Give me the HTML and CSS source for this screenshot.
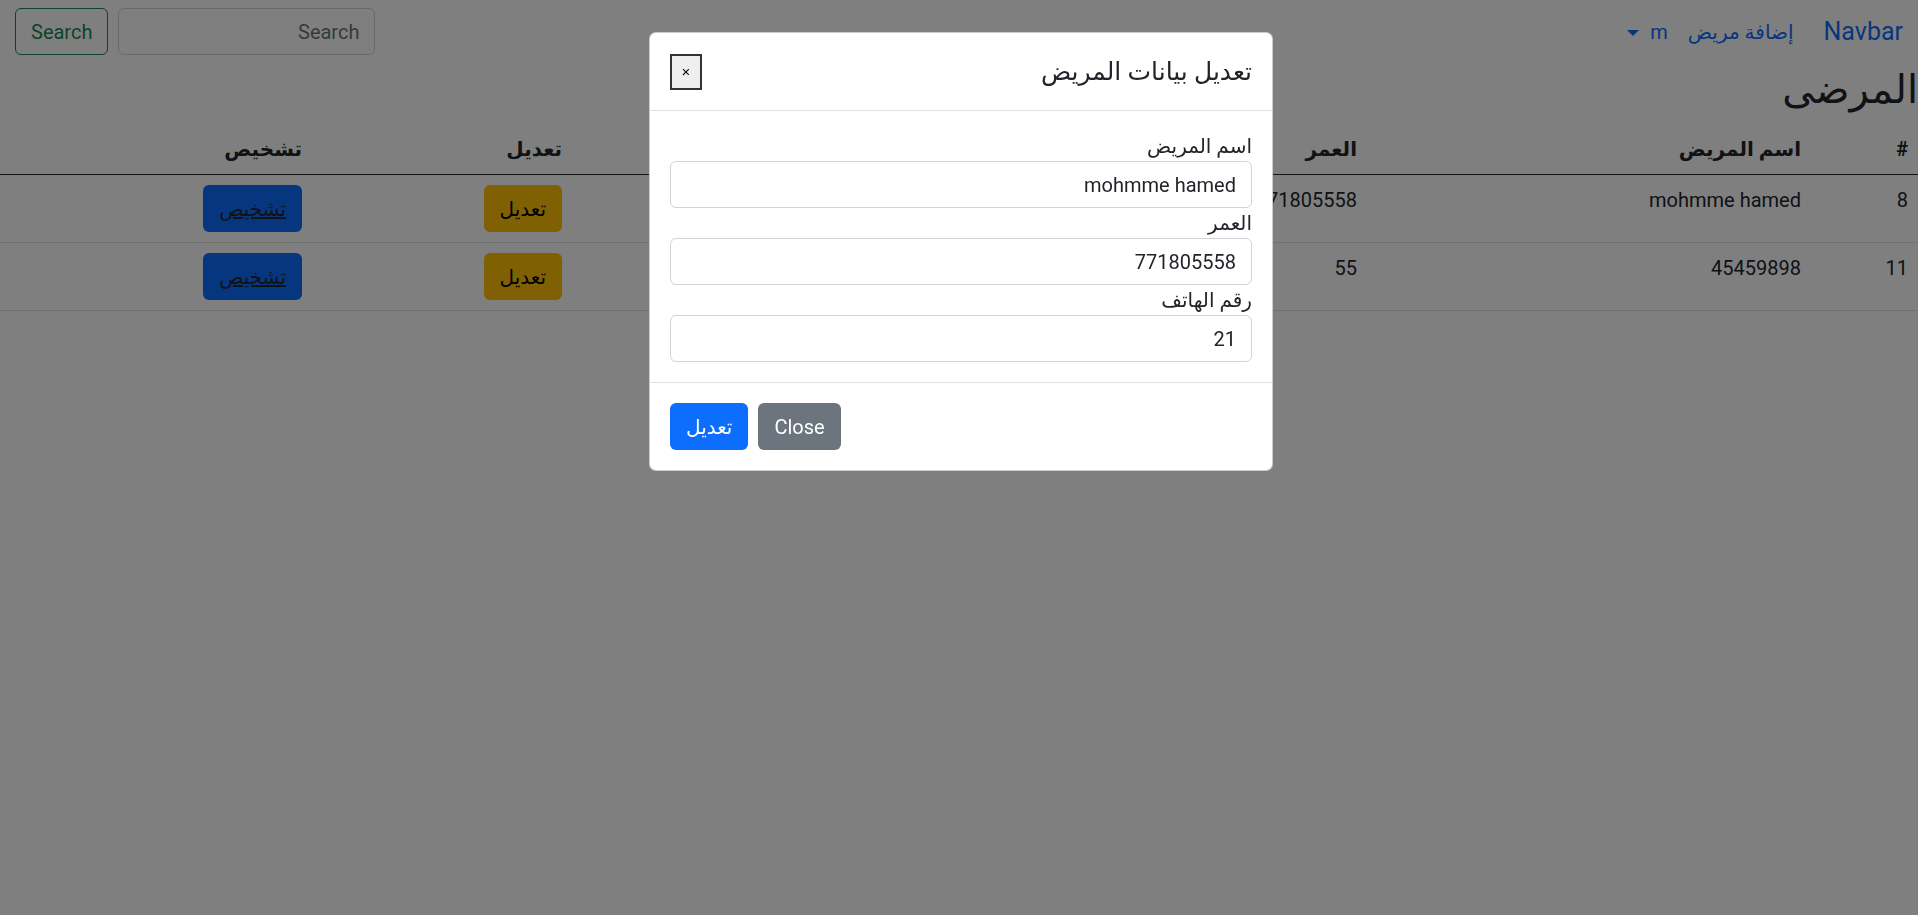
FILE: index.html
```html
<!DOCTYPE html>
<html lang="ar" dir="rtl">
<head>
  <meta charset="UTF-8">
  <title>المرضى</title>
  <link rel="stylesheet" href="styles.css">
</head>
<body>

<nav class="navbar">
  <a class="navbar-brand" href="#">Navbar</a>
  <ul class="navbar-nav">
    <li><a class="nav-link" href="#">إضافة مريض</a></li>
    <li><a class="nav-link dropdown-toggle" href="#">m</a></li>
  </ul>
  <form class="search-form">
    <input class="form-control search-input" type="search" placeholder="Search">
    <button class="btn btn-outline-success" type="button">Search</button>
  </form>
</nav>

<h2 class="page-title">المرضى</h2>

<table class="table">
  <colgroup>
    <col class="col-id">
    <col class="col-name">
    <col class="col-age">
    <col class="col-phone">
    <col class="col-edit">
    <col class="col-diag">
  </colgroup>
  <thead>
    <tr>
      <th>#</th>
      <th>اسم المريض</th>
      <th>العمر</th>
      <th>رقم الهاتف</th>
      <th>تعديل</th>
      <th>تشخيص</th>
    </tr>
  </thead>
  <tbody>
    <tr>
      <td>8</td>
      <td>mohmme hamed</td>
      <td>771805558</td>
      <td>21</td>
      <td><button class="btn btn-warning" type="button">تعديل</button></td>
      <td><button class="btn btn-primary" type="button"><a class="btn-link" href="#">تشخيص</a></button></td>
    </tr>
    <tr>
      <td>11</td>
      <td>45459898</td>
      <td>55</td>
      <td>771805558</td>
      <td><button class="btn btn-warning" type="button">تعديل</button></td>
      <td><button class="btn btn-primary" type="button"><a class="btn-link" href="#">تشخيص</a></button></td>
    </tr>
  </tbody>
</table>

<div class="modal">
  <div class="modal-dialog">
    <div class="modal-header">
      <h5 class="modal-title">تعديل بيانات المريض</h5>
      <button class="close-x" type="button">×</button>
    </div>
    <div class="modal-body">
      <label for="pname">اسم المريض</label>
      <input class="form-control" id="pname" type="text" value="mohmme hamed">
      <label for="page">العمر</label>
      <input class="form-control" id="page" type="text" value="771805558">
      <label for="pphone">رقم الهاتف</label>
      <input class="form-control" id="pphone" type="text" value="21">
    </div>
    <div class="modal-footer">
      <button class="btn btn-secondary" type="button">Close</button>
      <button class="btn btn-primary" type="button">تعديل</button>
    </div>
  </div>
</div>

</body>
</html>
```

FILE: styles.css
```css
body {
  margin: 0;
  font-family: Roboto, "DejaVu Sans", sans-serif;
  font-size: 20px;
  line-height: 30px;
  color: #212529;
  background: #fff;
  text-align: right;
}
a {
  color: #0d6efd;
  text-decoration: none;
}

/* buttons and inputs */
.btn {
  font-family: inherit;
  font-size: 20px;
  line-height: 30px;
  height: 47px;
  padding: 0 15px;
  border: 1px solid transparent;
  border-radius: 6px;
  cursor: pointer;
}
.btn-outline-success {
  color: #198754;
  border-color: #198754;
  background: transparent;
}
.btn-warning {
  background: #ffc107;
  color: #000;
}
.btn-primary {
  background: #0d6efd;
  color: #fff;
}
.btn-secondary {
  background: #6c757d;
  color: #fff;
}
.btn-link {
  color: #212529;
  text-decoration: underline;
}
.form-control {
  display: block;
  box-sizing: border-box;
  width: 100%;
  height: 47px;
  padding: 7px 15px;
  font-family: inherit;
  font-size: 20px;
  line-height: 30px;
  color: #212529;
  background: #fff;
  border: 1px solid #ced4da;
  border-radius: 6px;
}
.form-control::placeholder {
  color: #6c757d;
}

/* navbar */
.navbar {
  display: flex;
  align-items: center;
  height: 47px;
  padding: 8px 15px 11px;
}
.navbar-brand {
  font-size: 25px;
  line-height: 37px;
  margin-left: 20px;
}
.navbar-nav {
  display: flex;
  list-style: none;
  margin: 0;
  padding: 0;
}
.nav-link {
  display: block;
  padding: 0 10px;
}
.dropdown-toggle::after {
  content: "";
  display: inline-block;
  margin-right: 11px;
  vertical-align: 3px;
  border-top: 6px solid;
  border-left: 6px solid transparent;
  border-right: 6px solid transparent;
}
.search-form {
  display: flex;
  margin-right: auto;
}
.search-form .search-input {
  width: 257px;
  margin-left: 10px;
}

/* page */
.page-title {
  margin: 0 0 10px;
  font-size: 40px;
  line-height: 48px;
  font-weight: 500;
}
.table {
  width: 100%;
  table-layout: fixed;
  border-collapse: collapse;
}
.col-id { width: 107px; }
.col-name { width: 444px; }
.col-age { width: 398px; }
.col-phone { width: 397px; }
.col-edit { width: 260px; }
.col-diag { width: 312px; }
.table th,
.table td {
  padding: 10px;
  text-align: right;
  vertical-align: top;
  border-bottom: 1px solid #dee2e6;
}
.table thead th {
  border-bottom-color: #212529;
}

/* modal */
.modal {
  position: fixed;
  inset: 0;
  background: rgba(0, 0, 0, 0.5);
}
.modal-dialog {
  width: 622px;
  margin: 32px auto 0;
  margin-left: calc(50% - 310px);
  background: #fff;
  border: 1px solid rgba(0, 0, 0, 0.2);
  border-radius: 7px;
}
.modal-header {
  display: flex;
  align-items: center;
  justify-content: space-between;
  padding: 20px;
  border-bottom: 1px solid #dee2e6;
}
.modal-title {
  margin: 0;
  font-size: 25px;
  line-height: 37px;
  font-weight: 500;
}
.close-x {
  width: 32px;
  height: 36px;
  padding: 0;
  font-size: 15px;
  background: #efefef;
  border: 2px solid #333;
  border-radius: 0;
}
.modal-body {
  padding: 20px;
}
.modal-body label {
  display: block;
}
.modal-footer {
  display: flex;
  justify-content: flex-end;
  padding: 15px;
  border-top: 1px solid #dee2e6;
}
.modal-footer .btn {
  margin: 5px;
}
```
